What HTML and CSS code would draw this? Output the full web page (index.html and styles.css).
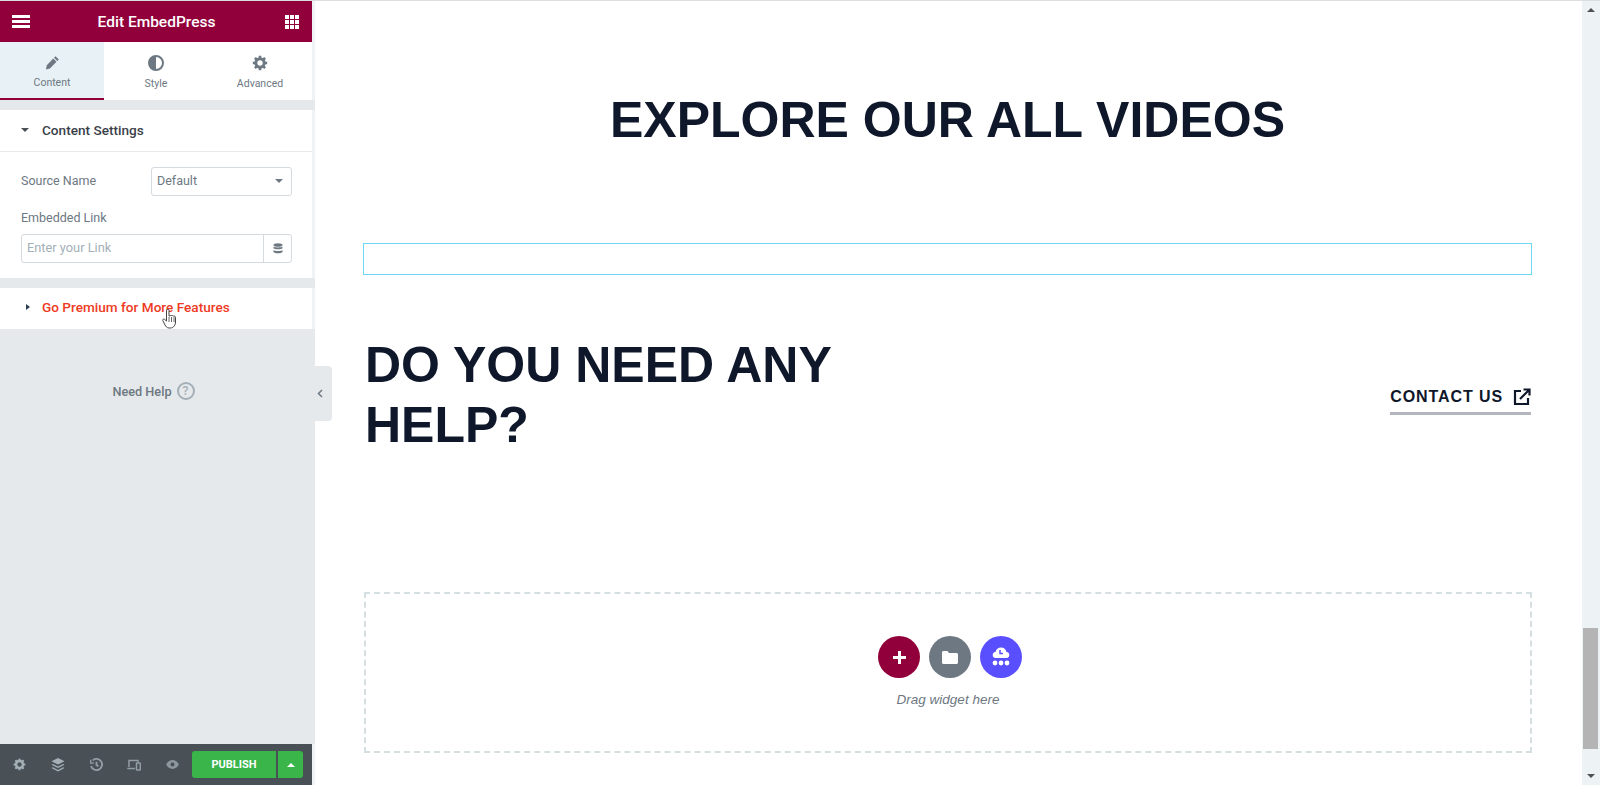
FILE: index.html
```html
<!DOCTYPE html>
<html lang="en">
<head>
    <meta charset="UTF-8">
    <meta name="viewport" content="width=device-width, initial-scale=1.0">
    <title>Edit EmbedPress</title>
    <link rel="stylesheet" href="styles.css">
</head>
<body>

<aside class="panel">
    <header class="panel-header">
        <svg class="header-icon" width="18" height="13" viewBox="0 0 18 13" fill="#fff"><rect width="18" height="3"/><rect y="5" width="18" height="3"/><rect y="10" width="18" height="3"/></svg>
        <h1>Edit EmbedPress</h1>
        <svg class="header-icon" width="14" height="14" viewBox="0 0 14 14" fill="#fff"><rect width="4" height="4"/><rect x="5" width="4" height="4"/><rect x="10" width="4" height="4"/><rect y="5" width="4" height="4"/><rect x="5" y="5" width="4" height="4"/><rect x="10" y="5" width="4" height="4"/><rect y="10" width="4" height="4"/><rect x="5" y="10" width="4" height="4"/><rect x="10" y="10" width="4" height="4"/></svg>
    </header>

    <nav class="tabs">
        <div class="tab active">
            <svg width="15" height="15" viewBox="0 0 15 15" fill="#6d7882"><path d="M10.500 1.200l3.300 3.300-1.500 1.500L9 2.700zM8.200 3.500l3.300 3.300-6.600 6.600-4 1 .9-4.200z"/></svg>
            <span>Content</span>
        </div>
        <div class="tab">
            <svg width="16" height="16" viewBox="0 0 16 16"><circle cx="8" cy="8" r="7" fill="none" stroke="#6d7882" stroke-width="2"/><path d="M8 1a7 7 0 0 0 0 14z" fill="#6d7882"/></svg>
            <span>Style</span>
        </div>
        <div class="tab">
            <svg width="16" height="16" viewBox="0 0 16 16"><circle cx="8" cy="8" r="4.200" fill="none" stroke="#6d7882" stroke-width="3"/><path d="M8 .8v3M8 12.200v3M.8 8h3M12.200 8h3M2.900 2.900L5 5M11 11l2.100 2.100M2.900 13.100L5 11M11 5l2.100-2.100" stroke="#6d7882" stroke-width="2.600"/></svg>
            <span>Advanced</span>
        </div>
    </nav>

    <section class="section">
        <div class="section-head">
            <i class="caret-down"></i>
            <span>Content Settings</span>
        </div>
        <div class="section-body">
            <div class="control-row">
                <label>Source Name</label>
                <div class="select">
                    <span>Default</span>
                    <i class="caret-down small"></i>
                </div>
            </div>
            <label class="stacked-label">Embedded Link</label>
            <div class="link-input">
                <span>Enter your Link</span>
                <div class="link-btn">
                    <svg width="10" height="11" viewBox="0 0 10 11" fill="#6d7882"><ellipse cx="5" cy="2" rx="4.500" ry="1.800"/><path d="M.5 3.600C1.500 4.800 8.500 4.800 9.500 3.600V5.300C8.500 6.600 1.500 6.600.5 5.300zM.5 7C1.500 8.300 8.500 8.300 9.500 7V8.900C8.500 10.700 1.500 10.700.5 8.900z"/></svg>
                </div>
            </div>
        </div>
    </section>

    <section class="section premium">
        <div class="section-head">
            <i class="caret-right"></i>
            <span>Go Premium for More Features</span>
        </div>
    </section>

    <div class="need-help">
        <span>Need Help</span>
        <span class="help-mark">?</span>
    </div>

    <footer class="panel-footer">
        <span class="foot-icon"><svg width="13" height="13" viewBox="0 0 16 16"><circle cx="8" cy="8" r="4.200" fill="none" stroke="#a4afb7" stroke-width="3"/><path d="M8 .8v3M8 12.200v3M.8 8h3M12.200 8h3M2.900 2.900L5 5M11 11l2.100 2.100M2.900 13.100L5 11M11 5l2.100-2.100" stroke="#a4afb7" stroke-width="2.600"/></svg></span>
        <span class="foot-icon"><svg width="14" height="14" viewBox="0 0 14 14" fill="#a4afb7"><path d="M7 0l6.500 3.300L7 6.600.5 3.300z"/><path d="M1.800 6L7 8.600 12.200 6l1.300.7L7 10 .5 6.700z"/><path d="M1.800 9.300L7 12l5.200-2.700 1.300.7L7 13.400.5 10z"/></svg></span>
        <span class="foot-icon"><svg width="13" height="13" viewBox="0 0 14 14" fill="none" stroke="#939da4" stroke-width="2"><path d="M3 2.500A6 6 0 1 1 1.200 8.500"/><path d="M7 4v3.500L9 9"/><path d="M.8 2v3.500h3.500" stroke-width="1.500"/></svg></span>
        <span class="foot-icon"><svg width="14" height="12" viewBox="0 0 14 12" fill="none" stroke="#939da4" stroke-width="1.500"><path d="M8 9.500H1V8.800M2 8V1.500h9V3"/><rect x="9.500" y="4" width="3.800" height="7" rx=".5"/></svg></span>
        <span class="foot-icon"><svg width="13" height="9" viewBox="0 0 14 10"><path d="M0 5c3-6.500 11-6.500 14 0-3 6.500-11 6.500-14 0z" fill="#8c979e"/><circle cx="7" cy="5" r="2.200" fill="#495157"/></svg></span>
        <div class="publish">
            <span class="publish-btn">PUBLISH</span>
            <span class="publish-more"><i class="caret-up"></i></span>
        </div>
    </footer>
</aside>

<main class="canvas">
    <h2 class="title">EXPLORE OUR ALL VIDEOS</h2>
    <div class="empty-box"></div>
    <div class="help-row">
        <h2 class="help-title">DO YOU NEED ANY HELP?</h2>
        <a class="contact-link">
            <span>CONTACT US</span>
            <svg width="18" height="18" viewBox="0 0 18 18" fill="none" stroke="#0f172a" stroke-width="2.200"><path d="M8 3H2v13h13v-6"/><path d="M7 11L16.500 1.500M10.500 1.500h6v6"/></svg>
        </a>
    </div>
    <div class="dropzone">
        <div class="drop-buttons">
            <span class="round-btn add">
                <svg width="13" height="13" viewBox="0 0 13 13" fill="#fff"><rect x="5" width="3" height="13"/><rect y="5" width="13" height="3"/></svg>
            </span>
            <span class="round-btn folder">
                <svg width="16" height="13" viewBox="0 0 16 13" fill="#fff"><path d="M0 1.500C0 .7.700 0 1.500 0h4L7 2h7.500c.8 0 1.500.7 1.500 1.500v8c0 .8-.7 1.500-1.500 1.500h-13C.7 13 0 12.300 0 11.500z"/></svg>
            </span>
            <span class="round-btn embed">
                <svg width="20" height="20" viewBox="0 0 20 20" fill="#fff"><path d="M5 11a3 3 0 0 1-.5-6C5 2 7.500 .5 10 .5c3 0 5 2 5.500 4.500a3 3 0 0 1-.5 6z"/><path d="M9 3v3.500h3" fill="none" stroke="#5a4fff" stroke-width="1.500"/><circle cx="4" cy="16" r="2.400"/><circle cx="10" cy="16" r="2.400"/><circle cx="16" cy="16" r="2.400"/></svg>
            </span>
        </div>
        <p class="drop-text">Drag widget here</p>
    </div>
</main>

<div class="scrollbar">
    <i class="scroll-up"></i>
    <div class="scroll-track"><div class="scroll-thumb"></div></div>
    <i class="scroll-down"></i>
</div>

<div class="collapse-handle">
    <svg width="6" height="9" viewBox="0 0 6 9" fill="none" stroke="#6d7882" stroke-width="1.500"><path d="M5 1L1.500 4.500 5 8"/></svg>
</div>

<svg class="hand-cursor" width="15" height="21" viewBox="0 0 15 21"><path d="M5 1.500c1-.7 2 0 2 1V8l1 0c.5-.8 1.500-.8 2 0 .5-.6 1.500-.5 1.900.3.600-.4 1.600 0 1.600 1V14c0 3-2 6-5 6H7c-2 0-3-1.500-4-3L.8 12.500c-.4-1 .8-2 1.700-1.200L4.500 13V3c0-.6.100-1.200.5-1.500z" fill="#fff" stroke="#444" stroke-width="1"/><path d="M7 9v5M9.500 9v5M12 9v5" stroke="#444" stroke-width=".8"/></svg>

</body>
</html>
```

FILE: styles.css
```css
* {
    box-sizing: border-box;
}
html, body {
    height: 100%;
}
body {
    margin: 0;
    display: flex;
    height: 785px;
    overflow: hidden;
    position: relative;
    border-top: 1px solid #dcdde0;
    background-color: #fff;
    font-family: Roboto, Arial, sans-serif;
}
i {
    display: block;
}

/* editor panel */
.panel {
    width: 315px;
    flex-shrink: 0;
    display: flex;
    flex-direction: column;
    background-color: #e6e9ec;
}
.panel-header, .tabs, .section, .panel-footer {
    border-right: 3px solid #eff3f5;
}
.panel-header {
    height: 41px;
    flex-shrink: 0;
    display: flex;
    align-items: center;
    justify-content: space-between;
    padding: 0 13px 0 12px;
    background-color: #92003b;
}
.panel-header h1 {
    margin: 0 2px 0 0;
    font-size: 15.500px;
    font-weight: 500;
    color: #fff;
}
.tabs {
    display: flex;
    height: 58px;
    flex-shrink: 0;
    background-color: #fff;
}
.tab {
    flex: 1;
    display: flex;
    flex-direction: column;
    align-items: center;
    padding-top: 13px;
    gap: 6px;
    font-size: 10.500px;
    color: #6d7882;
}
.tab.active {
    background-color: #e8f1f5;
    border-bottom: 2px solid #92003b;
}
.section {
    background-color: #fff;
    margin-top: 10px;
}
.section-head {
    height: 41px;
    display: flex;
    align-items: center;
    padding-left: 21px;
    padding-bottom: 2px;
    gap: 13px;
    font-size: 13.600px;
    font-weight: 500;
    color: #3a3f4a;
}
.section-body {
    border-top: 1px solid #e6e9ec;
    padding: 15px 20px 0 21px;
    height: 127px;
}
.caret-down {
    width: 0;
    height: 0;
    border-left: 4px solid transparent;
    border-right: 4px solid transparent;
    border-top: 4px solid #495157;
}
.caret-down.small {
    border-top-color: #6d7882;
    margin-right: 2px;
}
.caret-right {
    width: 0;
    height: 0;
    margin-left: 5px;
    border-top: 3.500px solid transparent;
    border-bottom: 3.500px solid transparent;
    border-left: 4px solid #2c3e50;
}
.caret-up {
    width: 0;
    height: 0;
    border-left: 4px solid transparent;
    border-right: 4px solid transparent;
    border-bottom: 4px solid #fff;
}
.control-row {
    display: flex;
    align-items: center;
    justify-content: space-between;
}
.control-row label, .stacked-label {
    font-size: 12.500px;
    color: #6d7882;
}
.control-row label {
    padding-bottom: 2px;
}
.select {
    width: 141px;
    height: 29px;
    display: flex;
    align-items: center;
    justify-content: space-between;
    padding: 0 6px 2px 5px;
    border: 1px solid #d5dadf;
    border-radius: 3px;
    font-size: 12.500px;
    color: #6d7882;
}
.stacked-label {
    display: block;
    margin-top: 14px;
    margin-bottom: 9px;
}
.link-input {
    height: 29px;
    display: flex;
    border: 1px solid #d5dadf;
    border-radius: 3px;
    font-size: 12.800px;
    color: #a4afb7;
}
.link-input span {
    flex: 1;
    padding: 0 5px;
    line-height: 26px;
}
.link-btn {
    width: 28px;
    display: flex;
    align-items: center;
    justify-content: center;
    border-left: 1px solid #d5dadf;
}
.premium .section-head {
    padding-bottom: 3px;
    color: #ee3a24;
    gap: 12px;
}
.need-help {
    display: flex;
    align-items: center;
    justify-content: center;
    gap: 5px;
    margin-top: 53px;
    padding-right: 8px;
    font-size: 12.700px;
    font-weight: 500;
    color: #6d7882;
}
.help-mark {
    width: 18px;
    height: 18px;
    border: 2px solid #a4afb7;
    border-radius: 50%;
    text-align: center;
    line-height: 14px;
    font-size: 12px;
    color: #a4afb7;
}
.panel-footer {
    margin-top: auto;
    height: 41px;
    display: flex;
    align-items: center;
    padding-right: 9px;
    background-color: #495157;
}
.foot-icon {
    width: 38.500px;
    display: flex;
    justify-content: center;
}
.publish {
    display: flex;
    gap: 2px;
    margin-left: auto;
}
.publish-btn {
    width: 84px;
    height: 27px;
    display: flex;
    align-items: center;
    justify-content: center;
    background-color: #39b54a;
    border-radius: 3px 0 0 3px;
    font-size: 11px;
    font-weight: 700;
    color: #fff;
}
.publish-more {
    width: 25px;
    height: 27px;
    display: flex;
    align-items: center;
    justify-content: center;
    background-color: #39b54a;
    border-radius: 0 3px 3px 0;
}

/* page preview */
.canvas {
    flex: 1;
    min-width: 0;
    padding: 0 50px 0 48px;
    font-family: "Liberation Sans", Arial, sans-serif;
    color: #0f172a;
}
.title {
    margin: 89px 0 0;
    text-align: center;
    font-size: 50px;
    line-height: 60px;
    font-weight: 700;
}
.empty-box {
    height: 32px;
    margin-top: 93px;
    border: 1px solid #71d7f7;
}
.help-row {
    display: flex;
    align-items: center;
    justify-content: space-between;
    margin-top: 60px;
    padding-left: 2px;
}
.help-title {
    margin: 0;
    width: 500px;
    font-size: 50px;
    line-height: 60px;
    font-weight: 700;
}
.contact-link {
    display: flex;
    align-items: center;
    gap: 10px;
    height: 34px;
    margin: 6px 1px 0 0;
    border-bottom: 3px solid #b4b6bd;
    font-size: 16px;
    font-weight: 700;
    letter-spacing: 0.900px;
}
.dropzone {
    margin: 137px 0 0 1px;
    height: 161px;
    display: flex;
    flex-direction: column;
    align-items: center;
    padding-top: 42px;
    border: 2px dashed #d5dfe2;
}
.drop-buttons {
    display: flex;
    gap: 9px;
    margin-left: 4px;
}
.round-btn {
    width: 42px;
    height: 42px;
    border-radius: 50%;
    display: flex;
    align-items: center;
    justify-content: center;
}
.round-btn.add {
    background-color: #92003b;
}
.round-btn.folder {
    background-color: #6d7882;
}
.round-btn.embed {
    background-color: #5a4fff;
}
.drop-text {
    margin: 14px 0 0;
    font-size: 13.500px;
    font-style: italic;
    color: #6d7882;
}

/* browser scrollbar */
.scrollbar {
    width: 18px;
    flex-shrink: 0;
    display: flex;
    flex-direction: column;
    align-items: center;
    background-color: #edf2f4;
}
.scroll-up {
    margin-top: 7px;
    width: 0;
    height: 0;
    border-left: 4px solid transparent;
    border-right: 4px solid transparent;
    border-bottom: 4px solid #505050;
}
.scroll-track {
    flex: 1;
    width: 100%;
    display: flex;
    flex-direction: column;
    justify-content: flex-end;
    padding: 0 2px 25px 1px;
}
.scroll-thumb {
    height: 121px;
    background-color: #b4b4b4;
}
.scroll-down {
    margin-bottom: 7px;
    width: 0;
    height: 0;
    border-left: 4px solid transparent;
    border-right: 4px solid transparent;
    border-top: 4px solid #505050;
}

/* overlays */
.collapse-handle {
    position: absolute;
    left: 315px;
    top: 365px;
    width: 17px;
    height: 55px;
    display: flex;
    align-items: center;
    padding-left: 2px;
    background-color: #e6e9ec;
    border-radius: 0 4px 4px 0;
}
.hand-cursor {
    position: absolute;
    left: 162px;
    top: 307px;
}
```
